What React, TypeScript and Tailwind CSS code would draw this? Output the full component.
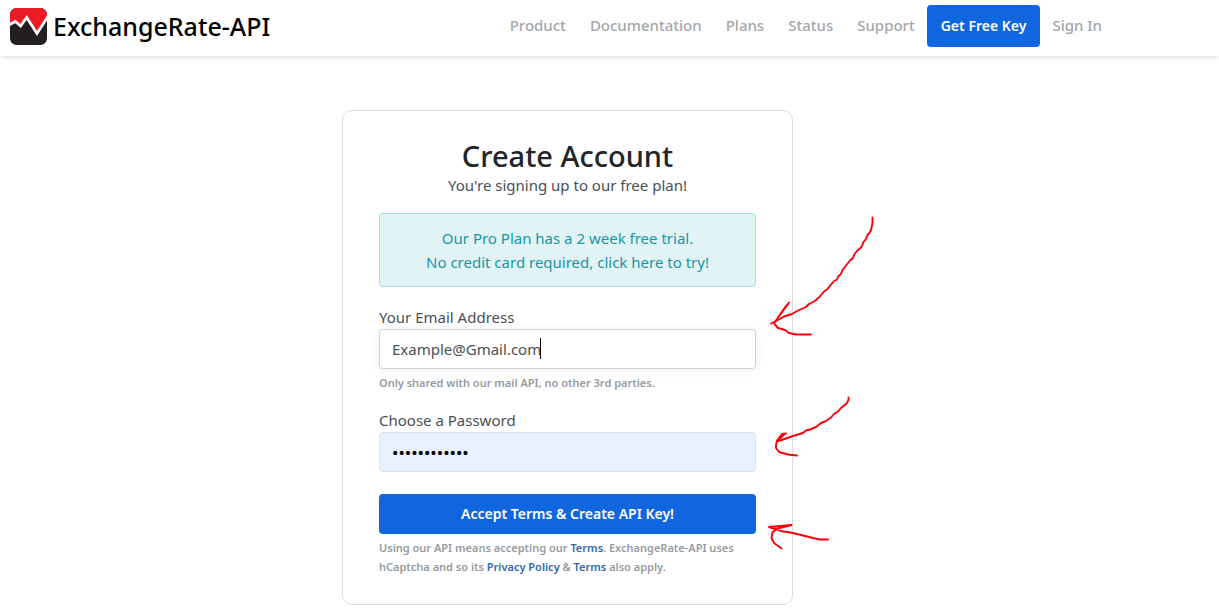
import { useState } from "react";

const navLinks = ["Product", "Documentation", "Plans", "Status", "Support"];

function Logo() {
  return (
    <a href="#home" className="flex items-center gap-1.5 text-black">
      <svg width="37" height="37" viewBox="0 0 37 37" aria-hidden="true">
        <clipPath id="logo-clip">
          <rect width="37" height="37" rx="6.5" />
        </clipPath>
        <g clipPath="url(#logo-clip)">
          <rect width="37" height="37" fill="#231f20" />
          <path d="M0 0H38V9.500L27 25.500L16.700 9.500L10.600 18L5.300 13.500L0 16.500Z" fill="#ed1c24" />
          <path
            d="M-1 17L5.300 13.500L10.600 18L16.700 9.500L27 25.500L38 8.500"
            fill="none"
            stroke="#fff"
            strokeWidth="2.800"
          />
        </g>
      </svg>
      <span className="text-[25px] leading-8 font-medium">ExchangeRate-API</span>
    </a>
  );
}

function Header() {
  return (
    <header className="flex h-14 items-center justify-between bg-white pr-[117px] pb-1 pl-2.5 shadow-[0_1px_6px_rgba(0,0,0,0.15)]">
      <Logo />
      <nav className="flex items-center font-medium text-[#a3a6aa]">
        {navLinks.map((label) => (
          <a key={label} href={`#${label.toLowerCase()}`} className="px-3 pb-0.5">
            {label}
          </a>
        ))}
        <a
          href="#get-key"
          className="flex h-[42px] items-center rounded bg-[#1066de] px-3.5 text-sm font-semibold text-white"
        >
          Get Free Key
        </a>
        <a href="#sign-in" className="pb-0.5 pl-3">
          Sign In
        </a>
      </nav>
    </header>
  );
}

function Arrows() {
  return (
    <svg
      className="pointer-events-none absolute top-[99px] left-full -ml-8"
      width="120"
      height="350"
      viewBox="760 210 120 350"
      fill="none"
      stroke="#fb0007"
      strokeWidth="1.900"
      strokeLinecap="round"
      strokeLinejoin="round"
      aria-hidden="true"
    >
      <path d="M872.500 217.500L872.500 223L871 230L869.500 233L867.500 235L866 239L863.500 242L861.500 247L857 251L854.500 254L853 258L850 260.500L842.500 270L841 274L838.500 276L837 279.500L834 281L827 289.500L824 291.500L819 297.500L814 301.500L809 304L806 307L797 311L792 314L784 316.500L780 319L771 323.500" />
      <path d="M789 302.500L786 306L774.500 322.500M788 304L775 322" />
      <path d="M774 323.500L778 328L785 330L789 333L796 334.500L811 334.500" />
      <path d="M848.500 397.500L848.500 400L846.500 403.500L841 408L838 411.500L834 414L831 417.500L825 421.500L821 423L816 427L810 429.500L806 430.500L803 433L793 436L783 439.500L777 441.500" />
      <path d="M786 433.500L782 434L777 440.500L776 445L776 448L779 452L788 454.500L797 455.500M784 434.500L777 441.500" />
      <path d="M769 527L791.500 525L776 529L769 527L783 531.500L788 532L795 533.500L813 538L820 539.500L828 539.500" />
      <path d="M776 529L772.500 532.500L771.500 538L774 543L781.500 548.500" />
    </svg>
  );
}

export default function App() {
  const [email, setEmail] = useState("Example@Gmail.com");
  const [password, setPassword] = useState("abcdefghijkl");

  return (
    <div className="min-h-screen overflow-hidden bg-white font-['Noto_Sans','Open_Sans',sans-serif] text-[15px] leading-6 text-[#495057]">
      <Header />
      <main className="flex justify-center pt-[54px] pr-[84px]">
        <section className="relative w-full max-w-[451px] rounded-[10px] border border-[#dcdcde] px-9 pt-7 pb-7">
          <div className="text-center">
            <h1 className="text-[29px] leading-[34px] font-medium text-[#212529]">Create Account</h1>
            <p>You're signing up to our free plan!</p>
          </div>
          <a
            href="#pro-trial"
            className="mt-4 block rounded border border-[#abdde5] bg-[#e2f3f5] py-3 text-center text-[#1797a6]"
          >
            Our Pro Plan has a 2 week free trial.
            <br />
            No credit card required, click here to try!
          </a>
          <form onSubmit={(event) => event.preventDefault()}>
            <label htmlFor="email" className="mt-[18px] block">
              Your Email Address
            </label>
            <div className="relative">
              <input
                id="email"
                type="email"
                value={email}
                onChange={(event) => setEmail(event.target.value)}
                className="block h-10 w-full rounded border border-[#ced4da] bg-white px-3 shadow-[0_2px_10px_rgba(0,0,0,0.07)] outline-none"
              />
              <span className="absolute top-[9px] left-[161px] h-[21px] w-px bg-black" />
            </div>
            <p className="mt-1 text-[11px] leading-5 font-semibold text-[#959ba1]">
              Only shared with our mail API, no other 3rd parties.
            </p>
            <label htmlFor="password" className="mt-[15px] block">
              Choose a Password
            </label>
            <input
              id="password"
              type="password"
              value={password}
              onChange={(event) => setPassword(event.target.value)}
              className="block h-10 w-full rounded border border-[#dbe0e8] bg-[#e8effd] px-3 text-[17px] text-black outline-none"
            />
            <button
              type="submit"
              className="mt-[22px] block h-10 w-full rounded bg-[#1066de] text-sm font-semibold text-white"
            >
              Accept Terms &amp; Create API Key!
            </button>
          </form>
          <p className="mt-1 text-[11px] leading-[19px] font-semibold text-[#959ba1]">
            Using our API means accepting our{" "}
            <a href="#terms" className="text-[#3567ad]">Terms</a>. ExchangeRate-API uses hCaptcha and so its{" "}
            <a href="#privacy" className="text-[#3567ad]">Privacy Policy</a> &amp;{" "}
            <a href="#hcaptcha-terms" className="text-[#3567ad]">Terms</a> also apply.
          </p>
          <Arrows />
        </section>
      </main>
    </div>
  );
}
